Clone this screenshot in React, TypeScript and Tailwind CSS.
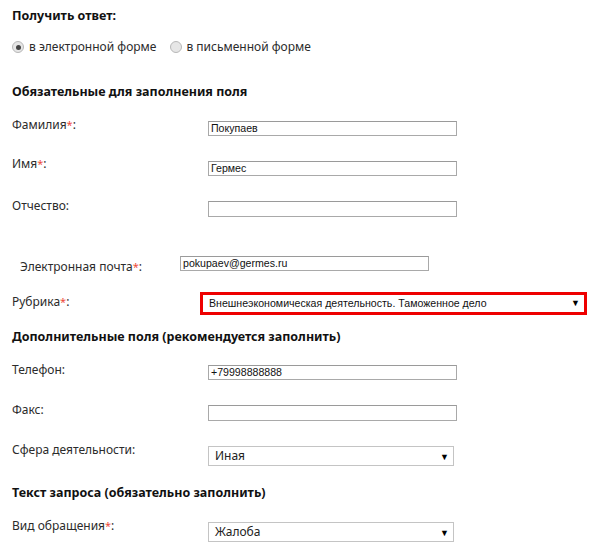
import React from "react";

const labelCls = "text-[12px] leading-[20px] text-[#2b2b2b] whitespace-nowrap";
const headCls = "text-[12.5px] leading-[20px] font-bold text-[#111] whitespace-nowrap";

function Star() {
  return <span className="text-[#ee4a3a] text-[11px]">*</span>;
}

function TextInput({ value, h = 15 }: { value?: string; h?: number }) {
  return (
    <div
      className={`w-[249px] border border-[#a9a9a9] border-t-[#9a9a9a] bg-white flex items-center pl-[2px] text-[10.6px] text-[#111] ${h === 16 ? "h-[16px]" : "h-[15px]"}`}
      style={{ fontFamily: '"Liberation Sans", Arial, sans-serif' }}
    >
      {value}
    </div>
  );
}

function Arrow() {
  return <span className="text-[9px] text-black leading-none">▼</span>;
}

function Select({ value }: { value: string }) {
  return (
    <div className="w-[246px] h-[20px] border border-[#c4c4c4] bg-white flex items-center justify-between pl-[6px] pr-[4px] text-[12px] text-[#222]">
      <span>{value}</span>
      <Arrow />
    </div>
  );
}

function Radio({ checked }: { checked?: boolean }) {
  return (
    <span className="w-[12px] h-[12px] rounded-full border border-[#b8b8b8] bg-[#e6e6e6] flex items-center justify-center">
      {checked && <span className="w-[5px] h-[5px] rounded-full bg-[#444]" />}
    </span>
  );
}

export default function App() {
  return (
    <div
      className="w-[610px] h-[553px] bg-white overflow-hidden pt-[6px] pl-[12px]"
      style={{ fontFamily: '"Noto Sans", "Open Sans", sans-serif' }}
    >
      <div className="h-[31px]">
        <div className={headCls}>Получить ответ:</div>
      </div>
      <div className="h-[45px] flex items-start">
        <div className="h-[20px] flex items-center gap-[5px]">
          <Radio checked />
          <span className={`${labelCls} text-[11.6px]`}>в электронной форме</span>
        </div>
        <div className="h-[20px] flex items-center gap-[4px] ml-[14px]">
          <Radio />
          <span className={`${labelCls} text-[11.6px]`}>в письменной форме</span>
        </div>
      </div>
      <div className="h-[33px]">
        <div className={headCls}>Обязательные для заполнения поля</div>
      </div>

      <div className="h-[39px] flex items-start">
        <div className={`${labelCls} w-[196px]`}>
          Фамилия<Star />:
        </div>
        <div className="mt-[6px]">
          <TextInput value="Покупаев" />
        </div>
      </div>
      <div className="h-[42px] flex items-start">
        <div className={`${labelCls} w-[196px]`}>
          Имя<Star />:
        </div>
        <div className="mt-[7px]">
          <TextInput value="Гермес" />
        </div>
      </div>
      <div className="h-[60px] flex items-start">
        <div className={`${labelCls} w-[196px]`}>Отчество:</div>
        <div className="mt-[5px]">
          <TextInput h={16} />
        </div>
      </div>
      <div className="h-[36px] flex items-start">
        <div className={`${labelCls} w-[168px] pl-[8px] mt-[1px]`}>
          Электронная почта<Star />:
        </div>
        <div className="mt-0">
          <TextInput value="pokupaev@germes.ru" />
        </div>
      </div>
      <div className="h-[35px] flex items-start">
        <div className={`${labelCls} w-[188px]`}>
          Рубрика<Star />:
        </div>
        <div
          className="w-[387px] h-[23px] border-[3px] border-[#ee0000] bg-white flex items-center justify-between pl-[6px] pr-[4px] text-[10.6px] text-[#111]"
          style={{ fontFamily: '"Liberation Sans", Arial, sans-serif' }}
        >
          <span>Внешнеэкономическая деятельность. Таможенное дело</span>
          <Arrow />
        </div>
      </div>
      <div className="h-[33px]">
        <div className={headCls}>Дополнительные поля (рекомендуется заполнить)</div>
      </div>
      <div className="h-[40px] flex items-start">
        <div className={`${labelCls} w-[196px]`}>Телефон:</div>
        <div className="mt-[5px]">
          <TextInput value="+79998888888" />
        </div>
      </div>
      <div className="h-[40px] flex items-start">
        <div className={`${labelCls} w-[196px]`}>Факс:</div>
        <div className="mt-[5px]">
          <TextInput h={16} />
        </div>
      </div>
      <div className="h-[43px] flex items-start">
        <div className={`${labelCls} w-[196px]`}>Сфера деятельности:</div>
        <div className="mt-[6px]">
          <Select value="Иная" />
        </div>
      </div>
      <div className="h-[33px]">
        <div className={headCls}>Текст запроса (обязательно заполнить)</div>
      </div>
      <div className="h-[37px] flex items-start">
        <div className={`${labelCls} w-[196px]`}>
          Вид обращения<Star />:
        </div>
        <div className="mt-[6px]">
          <Select value="Жалоба" />
        </div>
      </div>
    </div>
  );
}
